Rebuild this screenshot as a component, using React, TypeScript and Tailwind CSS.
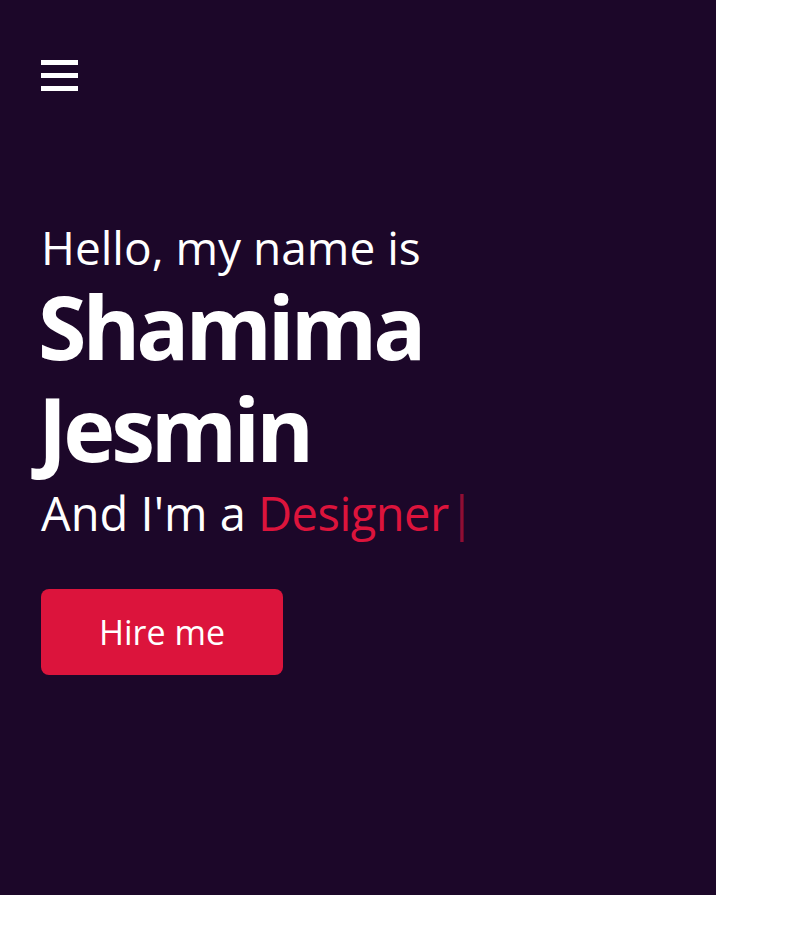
import React from "react";

const Home = () => {
  return (
    <div className="w-full min-h-[930px] bg-white">
      <section
        className="w-[716px] h-[895px] bg-[#1c0729] text-white pl-[41px] pt-[60px] flex flex-col"
        style={{ fontFamily: '"Open Sans", "Noto Sans", sans-serif' }}
      >
        {/* menu toggle */}
        <button className="w-[37px] flex flex-col gap-[8px]">
          <span className="block h-[5px] w-full bg-white" />
          <span className="block h-[5px] w-full bg-white" />
          <span className="block h-[5px] w-full bg-white" />
        </button>

        <div className="mt-[128px] flex flex-col">
          <p className="text-[46px] leading-[56px]">Hello, my name is</p>
          <h1 className="text-[88px] font-bold leading-[102px] -ml-[3px] tracking-[-4px]">
            Shamima
            <br />
            Jesmin
          </h1>
          <p className="text-[47px] leading-[56px] mt-[6px]">
            And I'm a <span className="text-[#dc143c] tracking-[-0.5px]">Designer</span>
            <span className="text-[#dc143c] opacity-60">|</span>
          </p>
          <a
            href="#"
            className="mt-[48px] w-[242px] h-[86px] rounded-[8px] bg-[#dc143c] flex items-center justify-center text-[34px]"
          >
            Hire me
          </a>
        </div>
      </section>
    </div>
  );
};

export default Home;
